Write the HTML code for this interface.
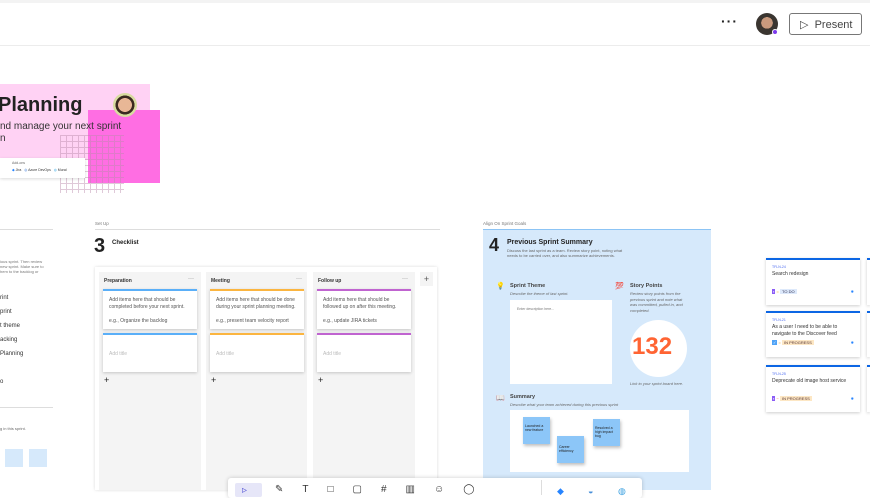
<!DOCTYPE html>
<html><head><style>
*{box-sizing:border-box;margin:0;padding:0}
body{width:870px;height:495px;overflow:hidden;background:#fff;font-family:"Liberation Sans",sans-serif;position:relative;color:#222}
.a{position:absolute}
.t{position:absolute;white-space:nowrap}
.col{position:absolute;background:#f4f4f4;top:272px;height:218px}
.card{position:absolute;background:#fff;box-shadow:0 1px 3px rgba(0,0,0,.2);font-size:5px;color:#555;line-height:7px;padding:6px 6px}
.jc{position:absolute;left:766px;width:94px;background:#fff;box-shadow:0 1px 3px rgba(0,0,0,.2);border-top:2px solid #0c66e4;font-size:5px;padding:5px 6px}
</style></head><body>
<div class="a" style="left:0;top:0;width:870px;height:3px;background:#f3f3f3"></div>
<div class="a" style="left:0;top:45px;width:870px;height:1px;background:#ececec"></div>
<div class="t" style="left:721px;top:13px;font-size:14px;letter-spacing:1px;font-weight:bold">···</div>
<div class="a" style="left:756px;top:13px;width:22px;height:22px;border-radius:50%;background:radial-gradient(circle at 50% 45%,#c99a7e 0 35%,#3a3530 36%);"></div>
<div class="a" style="left:772px;top:29px;width:6px;height:6px;border-radius:50%;background:#7c3aed;border:1px solid #fff"></div>
<div class="a" style="left:789px;top:13px;width:73px;height:22px;border:1px solid #777;border-radius:3px;font-size:11px;color:#444;padding:4px 0 0 10px">▷&nbsp; Present</div>

<div class="a" style="left:0;top:84px;width:150px;height:76px;background:#ffd2f4"></div>
<div class="a" style="left:88px;top:110px;width:72px;height:73px;background:#ff6ee3"></div>
<div class="a" style="left:60px;top:135px;width:64px;height:58px;background-image:linear-gradient(#b98aaa 1px,transparent 1px),linear-gradient(90deg,#b98aaa 1px,transparent 1px);background-size:6px 6px;opacity:.45"></div>
<div class="a" style="left:113px;top:93px;width:24px;height:24px;border-radius:50%;background:radial-gradient(circle at 50% 50%,#e8b796 0 40%,#3b2a20 42% 55%,#d8dca0 57%)"></div>
<div class="t" style="left:-2px;top:94px;font-size:20px;font-weight:bold;color:#222">Planning</div>
<div class="t" style="left:0;top:121px;font-size:10px;color:#333">nd manage your next sprint</div>
<div class="t" style="left:0;top:133px;font-size:10px;color:#333">n</div>
<div class="a" style="left:0;top:158px;width:85px;height:20px;background:#fff;box-shadow:0 1px 3px rgba(0,0,0,.15)"></div>
<div class="t" style="left:12px;top:161px;font-size:3.5px;color:#666">Add-ons</div>
<div class="t" style="left:12px;top:168px;font-size:3.5px;color:#333"><span style="color:#2684ff">◆</span> Jira &nbsp; <span style="color:#0052cc">◎</span> Azure DevOps &nbsp; <span style="color:#4fb3e8">◍</span> Mural</div>

<div class="a" style="left:0;top:229px;width:53px;height:1px;background:#ddd"></div>
<div class="t" style="left:0;top:259px;font-size:4px;color:#777;line-height:5px">ious sprint. Then review<br>new sprint. Make sure to<br>hem to the backlog or</div>
<div class="t" style="left:0;top:291px;font-size:6px;color:#333;line-height:14px">rint<br>print<br>t theme<br>acking<br>Planning<br><br>o</div>
<div class="a" style="left:0;top:407px;width:53px;height:1px;background:#ddd"></div>
<div class="t" style="left:0;top:426px;font-size:4px;color:#666">g in this sprint.</div>
<div class="a" style="left:5px;top:449px;width:18px;height:18px;background:#d6e9fb"></div>
<div class="a" style="left:29px;top:449px;width:18px;height:18px;background:#d6e9fb"></div>

<div class="t" style="left:95px;top:221px;font-size:4.5px;color:#777">Set Up</div>
<div class="a" style="left:95px;top:229px;width:345px;height:1px;background:#ddd"></div>
<div class="t" style="left:94px;top:235px;font-size:20px;font-weight:bold">3</div>
<div class="t" style="left:112px;top:240px;font-size:6px;font-weight:bold">Checklist</div>
<div class="a" style="left:95px;top:267px;width:342px;height:223px;background:#fff;box-shadow:0 0 3px rgba(0,0,0,.15)"></div>
<div class="col" style="left:99px;width:102px"></div>
<div class="col" style="left:206px;width:101px"></div>
<div class="col" style="left:313px;width:102px"></div>
<div class="a" style="left:420px;top:272px;width:13px;height:14px;background:#f4f4f4;font-size:9px;color:#555;text-align:center;line-height:14px">+</div>
<div class="t" style="left:104px;top:278px;font-size:5px;font-weight:bold;color:#333">Preparation</div>
<div class="t" style="left:211px;top:278px;font-size:5px;font-weight:bold;color:#333">Meeting</div>
<div class="t" style="left:318px;top:278px;font-size:5px;font-weight:bold;color:#333">Follow up</div>
<div class="t" style="left:188px;top:276px;font-size:6px;color:#666">···</div>
<div class="t" style="left:296px;top:276px;font-size:6px;color:#666">···</div>
<div class="t" style="left:402px;top:276px;font-size:6px;color:#666">···</div>
<div class="card" style="left:103px;top:289px;width:94px;height:40px;border-top:2px solid #5aaff8">Add items here that should be<br>completed before your next sprint.<br><br>e.g., Organize the backlog</div>
<div class="card" style="left:210px;top:289px;width:94px;height:40px;border-top:2px solid #fbb540">Add items here that should be done<br>during your sprint planning meeting.<br><br>e.g., present team velocity report</div>
<div class="card" style="left:317px;top:289px;width:94px;height:40px;border-top:2px solid #c064d0">Add items here that should be<br>followed up on after this meeting.<br><br>e.g., update JIRA tickets</div>
<div class="card" style="left:103px;top:333px;width:94px;height:39px;border-top:2px solid #5aaff8;color:#bbb;padding-top:16px">Add title</div>
<div class="card" style="left:210px;top:333px;width:94px;height:39px;border-top:2px solid #fbb540;color:#bbb;padding-top:16px">Add title</div>
<div class="card" style="left:317px;top:333px;width:94px;height:39px;border-top:2px solid #c064d0;color:#bbb;padding-top:16px">Add title</div>
<div class="t" style="left:104px;top:375px;font-size:9px">+</div>
<div class="t" style="left:211px;top:375px;font-size:9px">+</div>
<div class="t" style="left:318px;top:375px;font-size:9px">+</div>

<div class="t" style="left:483px;top:221px;font-size:4.5px;color:#777">Align On Sprint Goals</div>
<div class="a" style="left:483px;top:229px;width:228px;height:261px;background:#d6e9fb;border-top:1px solid #8cc4f5"></div>
<div class="t" style="left:489px;top:235px;font-size:18px;font-weight:bold">4</div>
<div class="t" style="left:507px;top:239px;font-size:7px;font-weight:bold">Previous Sprint Summary</div>
<div class="t" style="left:507px;top:248px;font-size:4px;color:#666;line-height:5px">Discuss the last sprint as a team. Review story point, noting what<br>needs to be carried over, and also summarize achievements.</div>
<div class="t" style="left:496px;top:282px;font-size:7px">💡</div>
<div class="t" style="left:510px;top:283px;font-size:5.5px;font-weight:bold;color:#444">Sprint Theme</div>
<div class="t" style="left:510px;top:291px;font-size:4px;color:#666;font-style:italic">Describe the theme of last sprint.</div>
<div class="a" style="left:510px;top:300px;width:102px;height:84px;background:#fff"></div>
<div class="t" style="left:517px;top:307px;font-size:3.5px;color:#777">Enter description here...</div>
<div class="t" style="left:615px;top:282px;font-size:7px;color:#e33">💯</div>
<div class="t" style="left:630px;top:283px;font-size:5.5px;font-weight:bold;color:#444">Story Points</div>
<div class="t" style="left:630px;top:291px;font-size:4px;color:#666;font-style:italic;line-height:5.5px">Review story points from the<br>previous sprint and note what<br>was committed, pulled in, and<br>completed.</div>
<div class="a" style="left:630px;top:320px;width:57px;height:57px;border-radius:50%;background:#fff"></div>
<div class="t" style="left:632px;top:333px;font-size:24px;font-weight:bold;color:#ff6433">132</div>
<div class="t" style="left:630px;top:381px;font-size:4px;color:#666;font-style:italic">Link to your sprint board here.</div>
<div class="t" style="left:496px;top:394px;font-size:7px">📖</div>
<div class="t" style="left:510px;top:394px;font-size:5.5px;font-weight:bold;color:#444">Summary</div>
<div class="t" style="left:510px;top:402px;font-size:4px;color:#666;font-style:italic">Describe what your team achieved during this previous sprint</div>
<div class="a" style="left:510px;top:410px;width:179px;height:62px;background:#fff"></div>
<div class="a" style="left:523px;top:417px;width:27px;height:27px;background:#8cc6f8;box-shadow:1px 2px 3px rgba(0,0,0,.25);font-size:3.5px;padding:7px 2px">Launched a<br>new feature</div>
<div class="a" style="left:557px;top:436px;width:27px;height:27px;background:#8cc6f8;box-shadow:1px 2px 3px rgba(0,0,0,.25);font-size:3.5px;padding:9px 2px">Career<br>efficiency</div>
<div class="a" style="left:593px;top:419px;width:27px;height:27px;background:#8cc6f8;box-shadow:1px 2px 3px rgba(0,0,0,.25);font-size:3.5px;padding:7px 2px">Resolved a<br>high impact<br>bug</div>

<div class="jc" style="top:258px;height:47px"><div style="color:#4b6bf0;font-size:3.5px">TFLN-24</div><div style="color:#333;margin-top:2px">Search redesign</div><div style="margin-top:12px;font-size:4px"><span style="background:#8b5cf6;color:#fff;padding:0 1px">▪</span> <span style="color:#f5a623">=</span> <span style="background:#dde9fb;color:#335;padding:0 2px">TO DO</span><span style="float:right;color:#2684ff">✹</span></div></div>
<div class="jc" style="top:311px;height:46px"><div style="color:#4b6bf0;font-size:3.5px">TFLN-21</div><div style="color:#333;margin-top:2px;line-height:7px">As a user I need to be able to<br>navigate to the Discover feed</div><div style="margin-top:2px;font-size:4px"><span style="background:#4fa3f7;color:#fff;padding:0 1px">✓</span> <span style="color:#f5a623">=</span> <span style="background:#fde7c4;color:#533;padding:0 2px">IN PROGRESS</span><span style="float:right;color:#2684ff">✹</span></div></div>
<div class="jc" style="top:365px;height:47px"><div style="color:#4b6bf0;font-size:3.5px">TFLN-25</div><div style="color:#333;margin-top:2px">Deprecate old image host service</div><div style="margin-top:12px;font-size:4px"><span style="background:#8b5cf6;color:#fff;padding:0 1px">▪</span> <span style="color:#f55">−</span> <span style="background:#fde7c4;color:#533;padding:0 2px">IN PROGRESS</span><span style="float:right;color:#2684ff">✹</span></div></div>
<div class="a" style="left:867px;top:258px;width:3px;height:47px;background:#fff;box-shadow:0 1px 3px rgba(0,0,0,.2);border-top:2px solid #0c66e4"></div>
<div class="a" style="left:867px;top:311px;width:3px;height:46px;background:#fff;box-shadow:0 1px 3px rgba(0,0,0,.2);border-top:2px solid #0c66e4"></div>
<div class="a" style="left:867px;top:365px;width:3px;height:47px;background:#fff;box-shadow:0 1px 3px rgba(0,0,0,.2);border-top:2px solid #0c66e4"></div>

<div class="a" style="left:228px;top:478px;width:414px;height:20px;background:#fff;box-shadow:0 0 4px rgba(0,0,0,.2);border-radius:3px"></div>
<div class="a" style="left:235px;top:483px;width:27px;height:14px;background:#e6e6f8;border-radius:2px"></div>
<div class="t" style="left:242px;top:485px;font-size:10px;color:#5b5bd6">▹</div>
<div class="t" style="left:275px;top:484px;font-size:10px;color:#333;letter-spacing:19px">✎T□▢#▥☺◯</div>
<div class="a" style="left:541px;top:480px;width:1px;height:15px;background:#ddd"></div>
<div class="t" style="left:557px;top:486px;font-size:9px;color:#2684ff">◆</div>
<div class="t" style="left:588px;top:486px;font-size:9px;color:#4a90d9">◒</div>
<div class="t" style="left:618px;top:486px;font-size:9px;color:#3aa0e0">◍</div>
</body></html>
